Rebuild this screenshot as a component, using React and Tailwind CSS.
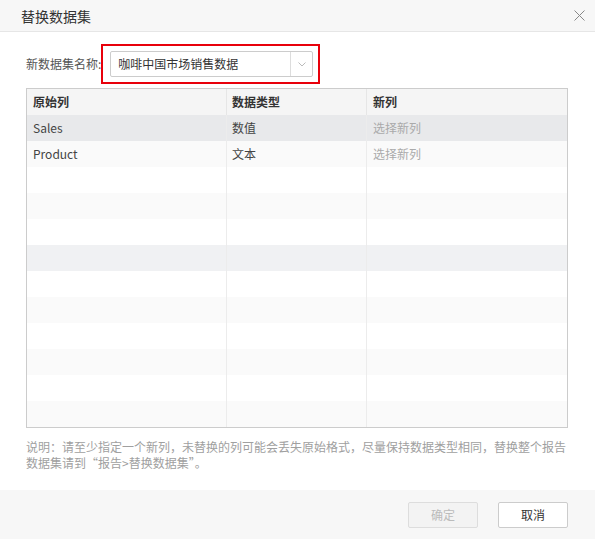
import React from 'react';

const rows = [
    { orig: 'Sales', type: '数值', bg: 'bg-[#e8e9eb]' },
    { orig: 'Product', type: '文本', bg: 'bg-[#fafafa]' },
    { bg: 'bg-white' },
    { bg: 'bg-[#fafafa]' },
    { bg: 'bg-white' },
    { bg: 'bg-[#f0f1f3]' },
    { bg: 'bg-white' },
    { bg: 'bg-[#fafafa]' },
    { bg: 'bg-white' },
    { bg: 'bg-[#fafafa]' },
    { bg: 'bg-white' },
    { bg: 'bg-[#fafafa]' },
];

const App = () => {
    return (
        <div className="w-[595px] h-[539px] flex flex-col bg-white text-[12px] text-[#333]" style={{ fontFamily: '"Noto Sans CJK SC", "Noto Sans", sans-serif' }}>
            {/* Title bar */}
            <div className="h-[32px] shrink-0 flex items-center justify-between bg-[#f7f7f7] border-b border-[#e6e6e6] pl-[21px] pr-[10px]">
                <span className="text-[14px] text-[#333] leading-none">替换数据集</span>
                <svg width="11" height="11" viewBox="0 0 11 11">
                    <path d="M0.5 0.5 L10.5 10.5 M10.5 0.5 L0.5 10.5" stroke="#888" strokeWidth="1" />
                </svg>
            </div>

            {/* Body */}
            <div className="flex-1 pl-[26px] pr-[27px] pt-[12px]">
                <div className="flex items-center">
                    <span className="text-[#555] leading-none">新数据集名称:</span>
                    <div className="h-[40px] w-[219px] border-2 border-[#e8000b] flex items-center pl-[7px] pr-[5px]">
                        <div className="flex-1 h-[26px] flex border border-[#ccc] rounded-[2px] bg-white">
                            <div className="flex-1 flex items-center pl-[7px] text-[#333] leading-none">咖啡中国市场销售数据</div>
                            <div className="w-[22px] border-l border-[#ddd] flex items-center justify-center">
                                <svg width="8" height="5" viewBox="0 0 8 5">
                                    <path d="M0.5 0.5 L4 4 L7.5 0.5" stroke="#bbb" strokeWidth="1" fill="none" />
                                </svg>
                            </div>
                        </div>
                    </div>
                </div>

                <div className="mt-[4px] border border-[#ccc]">
                    <div className="grid grid-cols-[200px_140px_1fr] h-[26px] bg-[#f5f5f5] font-semibold text-[#333]">
                        <div className="flex items-center pl-[6px] border-r border-[#e6e6e6]">原始列</div>
                        <div className="flex items-center pl-[5px] border-r border-[#e6e6e6]">数据类型</div>
                        <div className="flex items-center pl-[6px]">新列</div>
                    </div>
                    {rows.map((r, i) => (
                        <div key={i} className={`grid grid-cols-[200px_140px_1fr] h-[26px] ${r.bg}`}>
                            <div className="flex items-center pl-[6px] border-r border-[#ececec] text-[#444]">{r.orig}</div>
                            <div className="flex items-center pl-[5px] border-r border-[#ececec] text-[#444]">{r.type}</div>
                            <div className="flex items-center pl-[6px] text-[#aaa]">{r.orig ? '选择新列' : ''}</div>
                        </div>
                    ))}
                </div>

                <p className="mt-[11px] text-[#a0a0a0] leading-[16px]">
                    说明：请至少指定一个新列，未替换的列可能会丢失原始格式，尽量保持数据类型相同，替换整个报告数据集请到“报告&gt;替换数据集”。
                </p>
            </div>

            {/* Footer */}
            <div className="h-[49px] shrink-0 bg-[#f7f7f7] flex items-center justify-end gap-[20px] pr-[27px]">
                <button disabled className="w-[70px] h-[26px] border border-[#ddd] bg-[#f3f3f3] text-[#bbb] rounded-[2px]">确定</button>
                <button className="w-[70px] h-[26px] border border-[#ccc] bg-white text-[#333] rounded-[2px]">取消</button>
            </div>
        </div>
    );
};

export default App;
